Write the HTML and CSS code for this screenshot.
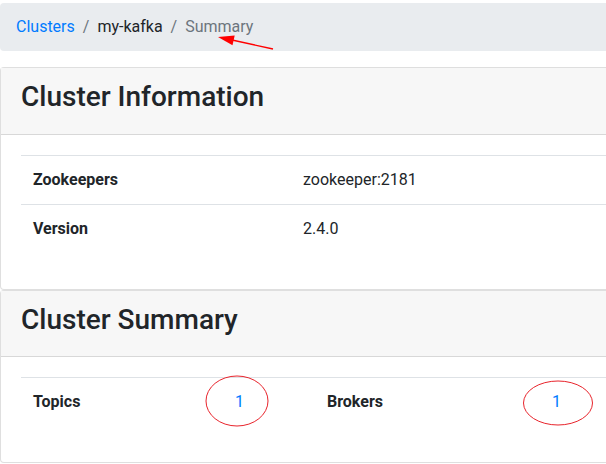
FILE: index.html
```html
<!DOCTYPE html>
<html lang="en">
<head>
<meta charset="utf-8">
<title>Cluster Summary</title>
<link rel="stylesheet" href="styles.css">
</head>
<body>
<div class="page">
  <nav class="breadcrumb">
    <a class="crumb-link" href="#">Clusters</a>
    <span class="sep">/</span>
    <span class="crumb">my-kafka</span>
    <span class="sep">/</span>
    <span class="crumb active">Summary</span>
  </nav>

  <section class="card">
    <div class="card-header"><h3 class="card-title">Cluster Information</h3></div>
    <div class="card-body">
      <table class="table">
        <tr><th class="col-label">Zookeepers</th><td>zookeeper:2181</td></tr>
        <tr><th class="col-label">Version</th><td>2.4.0</td></tr>
      </table>
    </div>
  </section>

  <section class="card">
    <div class="card-header"><h3 class="card-title">Cluster Summary</h3></div>
    <div class="card-body">
      <table class="table">
        <tr>
          <th class="col-topics">Topics</th>
          <td class="col-num1"><a class="num" href="#">1</a></td>
          <th class="col-brokers">Brokers</th>
          <td><a class="num" href="#">1</a></td>
        </tr>
      </table>
    </div>
  </section>

  <svg class="annotations" width="606" height="464" viewBox="0 0 606 464" aria-hidden="true">
    <line x1="273" y1="49" x2="232" y2="40" stroke="#f00" stroke-width="1.3"/>
    <polygon points="218,37 234.7,35.5 232.5,45.3" fill="#f00"/>
    <ellipse cx="237" cy="401" rx="31" ry="25" fill="none" stroke="#e8232b" stroke-width="1"/>
    <ellipse cx="558" cy="403" rx="34.5" ry="22" fill="none" stroke="#e8232b" stroke-width="1"/>
  </svg>
</div>
</body>
</html>
```

FILE: styles.css
```css
html, body {
  margin: 0;
  padding: 0;
  background: #fff;
}
body {
  font-family: Roboto, "Liberation Sans", sans-serif;
  font-size: 16px;
  line-height: 24px;
  color: #212529;
}
.page {
  position: relative;
  width: 606px;
  padding-top: 3px;
  overflow: hidden;
}
.breadcrumb {
  display: flex;
  align-items: center;
  background: #e9ecef;
  border-radius: 4px 0 0 4px;
  padding: 12px 16px;
  margin-bottom: 16px;
}
.crumb-link {
  color: #007bff;
  text-decoration: none;
}
.sep {
  color: #6c757d;
  padding: 0 8px;
}
.crumb { color: #212529; }
.crumb.active { color: #6c757d; }

.card {
  border: 1px solid rgba(0,0,0,.125);
  border-right: none;
  border-radius: 4px 0 0 4px;
  background: #fff;
}
.card-header {
  background: #f7f7f7;
  border-bottom: 1px solid rgba(0,0,0,.125);
  padding: 12px 20px;
}
.card-title {
  margin: 0 0 8px;
  font-size: 28px;
  line-height: 33.6px;
  font-weight: 500;
}
.card-body {
  padding: 20px 0 20px 20px;
}
.table {
  width: 100%;
  border-collapse: collapse;
  margin-bottom: 16px;
}
.table th, .table td {
  padding: 12px;
  border-top: 1px solid #dee2e6;
  text-align: left;
  vertical-align: top;
}
.table th { font-weight: 700; }
.col-label { width: 246px; }
.col-topics { width: 178px; }
.col-num1 { width: 68px; }
.col-brokers { width: 201px; }
.num {
  color: #007bff;
  text-decoration: none;
}
.annotations {
  position: absolute;
  left: 0;
  top: 0;
  pointer-events: none;
}
```
